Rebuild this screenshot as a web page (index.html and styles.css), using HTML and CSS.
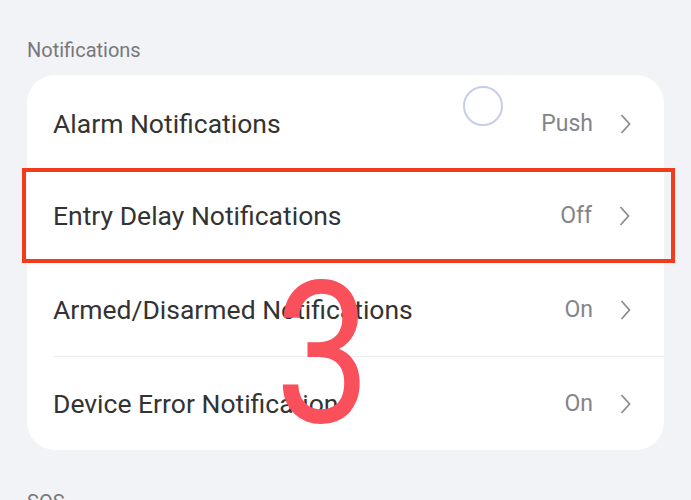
FILE: index.html
```html
<!DOCTYPE html>
<html>

<head>
    <title>Notifications</title>
    <link rel="stylesheet" href="styles.css">
</head>

<body>
    <div class="group-title">Notifications</div>

    <div class="card">
        <div class="row">
            <span class="label">Alarm Notifications</span>
            <span class="value">Push</span>
            <svg class="chevron" viewBox="0 0 12 22"><path d="M2 2 L10 11 L2 20" /></svg>
        </div>
        <div class="row highlight">
            <span class="label">Entry Delay Notifications</span>
            <span class="value">Off</span>
            <svg class="chevron" viewBox="0 0 12 22"><path d="M2 2 L10 11 L2 20" /></svg>
        </div>
        <div class="row">
            <span class="label">Armed/Disarmed Notifications</span>
            <span class="value">On</span>
            <svg class="chevron" viewBox="0 0 12 22"><path d="M2 2 L10 11 L2 20" /></svg>
        </div>
        <div class="row last">
            <span class="label">Device Error Notifications</span>
            <span class="value">On</span>
            <svg class="chevron" viewBox="0 0 12 22"><path d="M2 2 L10 11 L2 20" /></svg>
        </div>

        <!-- tap marker and step number drawn over the card -->
        <div class="tap"></div>
        <div class="step">3</div>
    </div>

    <div class="group-title">SOS</div>
</body>

</html>
```

FILE: styles.css
```css
body {
    margin: 0;
    padding: 38px 27px 0 27px;
    background: #f2f3f7;
    font-family: Roboto, "Liberation Sans", sans-serif;
    height: 500px;
    box-sizing: border-box;
    overflow: hidden;
}

.group-title {
    font-size: 20px;
    color: #77787c;
    line-height: 24px;
    margin-bottom: 13px;
}

.card {
    position: relative;
    background: white;
    border-radius: 28px;
    padding-top: 2px;
    margin-bottom: 40px;
}

.row {
    position: relative;
    display: flex;
    align-items: center;
    box-sizing: border-box;
    height: 94px;
    margin-left: 26px;
    padding-right: 32px;
    border-bottom: 1px solid #ececef;
}

.row.last {
    height: 93px;
    border-bottom: none;
}

.row.highlight {
    margin-top: -3px;
    margin-left: -5px;
    margin-right: -11px;
    padding-left: 27px;
    padding-right: 40px;
    height: 95px;
    border: 4px solid #f23a1c;
}

.label {
    flex: 1;
    font-size: 26.5px;
    color: #333333;
}

.value {
    font-size: 23px;
    color: #848589;
    margin-right: 26px;
}

.chevron {
    width: 13px;
    height: 22px;
}

.chevron path {
    fill: none;
    stroke: #8c8d91;
    stroke-width: 1.8;
}

.tap {
    position: absolute;
    left: 436px;
    top: 11px;
    width: 36px;
    height: 36px;
    border: 2px solid #c9cce8;
    border-radius: 50%;
}

.step {
    position: absolute;
    left: 248px;
    top: 180px;
    font-size: 198px;
    line-height: 198px;
    color: #f9505c;
    transform: scaleX(0.86);
    transform-origin: left top;
}
```
